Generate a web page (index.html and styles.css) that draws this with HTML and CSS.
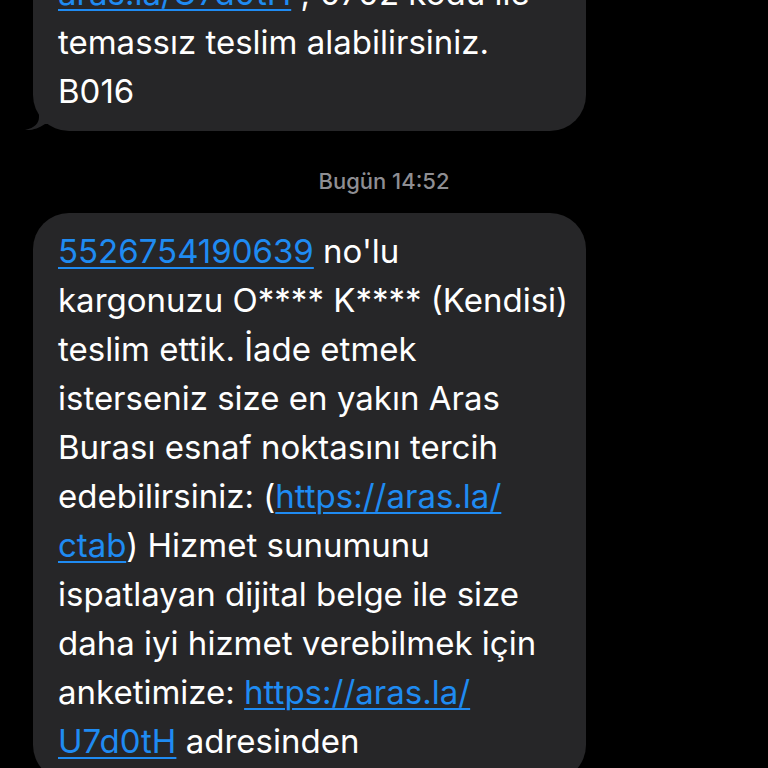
FILE: index.html
```html
<!DOCTYPE html>
<html lang="tr">
<head>
<meta charset="utf-8">
<link rel="stylesheet" href="styles.css">
</head>
<body>
<div class="thread">
  <div class="msg msg-first">
    <div class="bubble">
      <a class="link">aras.la/U7d0tH</a> ; 0702 kodu ile<br>
      temassız teslim alabilirsiniz.<br>
      B016
    </div>
    <svg class="tail" width="30" height="22" viewBox="0 0 30 22">
      <path d="M18 0 L18 8 C18 14 14 19 4 21 C12 21.5 18 19 24 15 L30 15 L30 0 Z" fill="#262628"/>
    </svg>
  </div>
  <div class="stamp">Bugün 14:52</div>
  <div class="msg">
    <div class="bubble">
      <a class="link">5526754190639</a> no'lu<br>
      kargonuzu O**** K**** (Kendisi)<br>
      teslim ettik. İade etmek<br>
      isterseniz size en yakın Aras<br>
      Burası esnaf noktasını tercih<br>
      edebilirsiniz: (<a class="link">https://aras.la/<br>ctab</a>) Hizmet sunumunu<br>
      ispatlayan dijital belge ile size<br>
      daha iyi hizmet verebilmek için<br>
      anketimize: <a class="link">https://aras.la/<br>U7d0tH</a> adresinden
    </div>
  </div>
</div>
</body>
</html>
```
FILE: styles.css
```css
html, body {
  margin: 0;
  padding: 0;
  background: #000;
  height: 768px;
  overflow: hidden;
}
.thread {
  display: flex;
  flex-direction: column;
  padding-left: 33px;
}
.msg {
  position: relative;
  width: 553px;
}
.msg-first {
  margin-top: -45px;
}
.bubble {
  background: #262628;
  border-radius: 36px;
  padding: 14px 25px 15px;
  color: #fff;
  font-family: Inter, Roboto, "Liberation Sans", sans-serif;
  font-size: 33px;
  line-height: 49px;
  letter-spacing: 0;
  white-space: nowrap;
}
.link {
  color: #1f8bf2;
  text-decoration: underline;
  text-decoration-thickness: 2px;
  text-underline-offset: 4px;
}
.tail {
  position: absolute;
  left: -12px;
  bottom: 0;
}
.stamp {
  width: 702px;
  text-align: center;
  color: #8e8e93;
  font-family: Inter, Roboto, "Liberation Sans", sans-serif;
  font-weight: 500;
  font-size: 22px;
  line-height: 26px;
  margin: 37px 0 19px;
}
```
